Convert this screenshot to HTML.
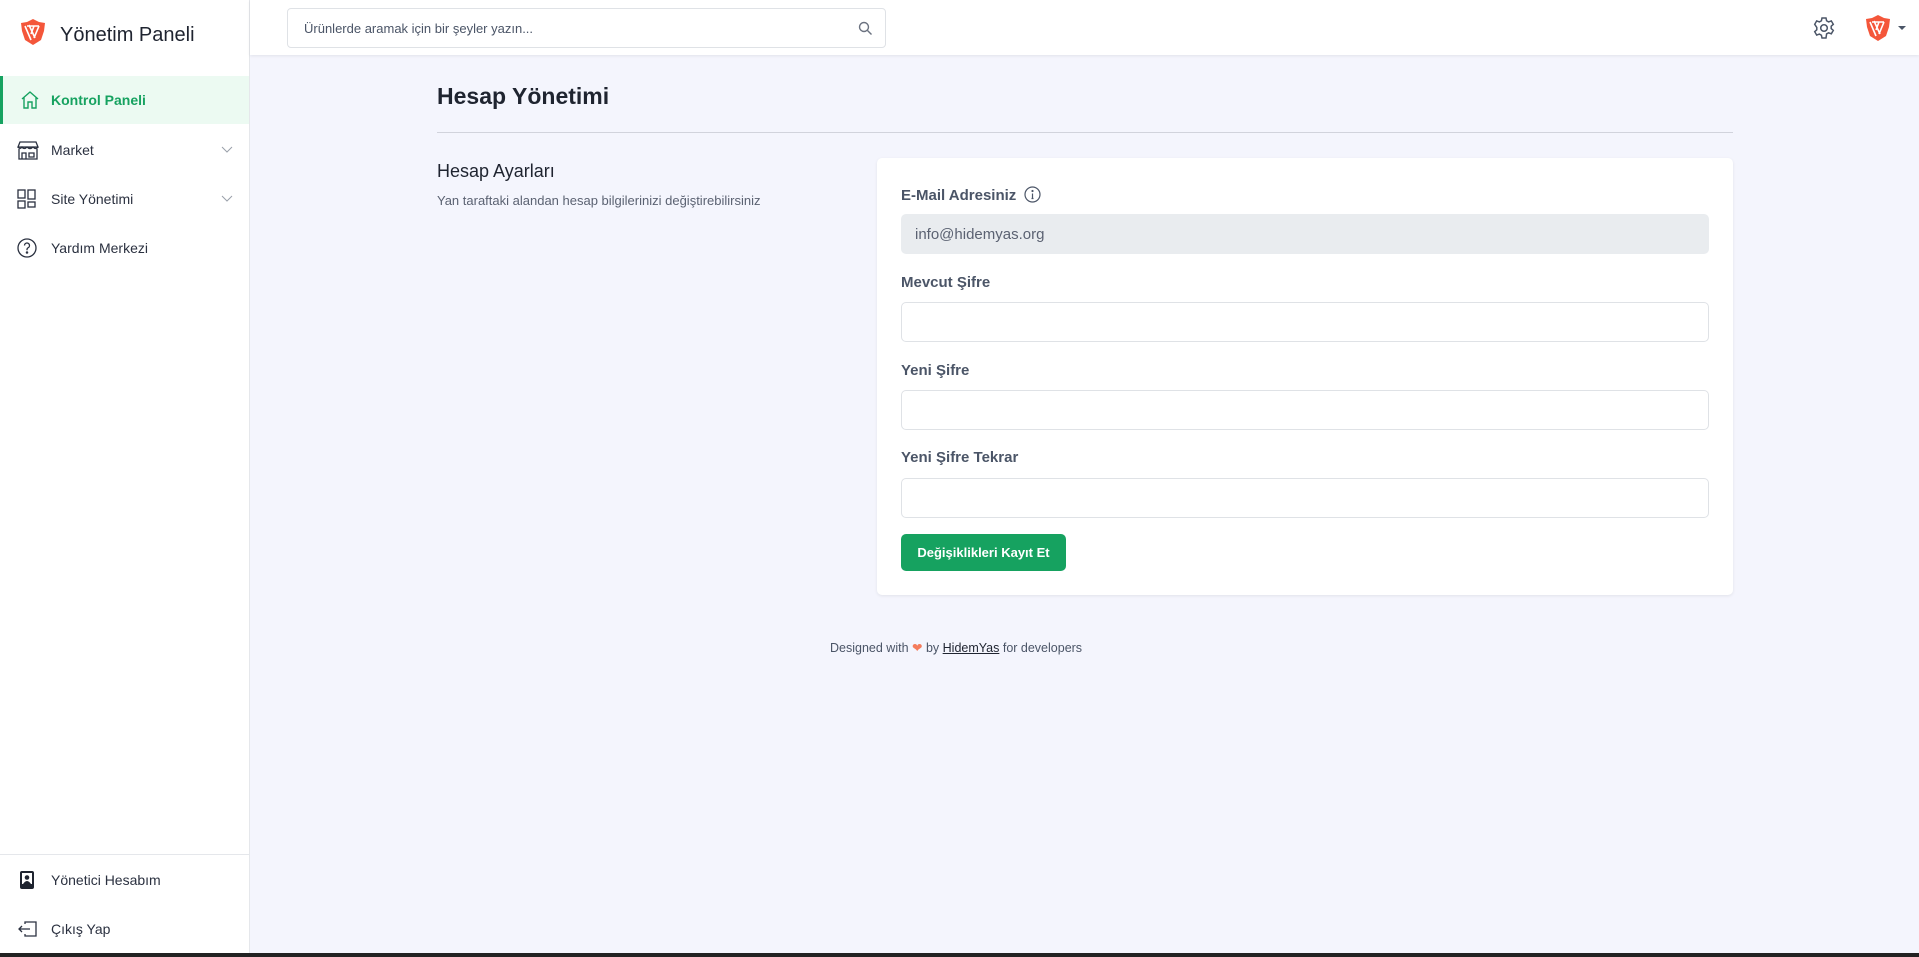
<!DOCTYPE html>
<html><head><meta charset="utf-8"><style>
*{box-sizing:border-box;margin:0;padding:0}
body{width:1919px;height:957px;overflow:hidden;background:#f4f5fd;font-family:"Liberation Sans",sans-serif;position:relative;color:#1f2430}
.side{position:absolute;left:0;top:0;width:250px;height:953px;background:#fff;border-right:1px solid #e5e7eb}
.hdr{position:absolute;left:250px;top:0;right:0;height:55px;background:#fff;box-shadow:0 1px 3px rgba(0,0,0,.08)}
.item{position:absolute;left:0;width:249px;height:48px;display:flex;align-items:center;font-size:14px;color:#2b3140}
.item svg{position:absolute;left:17px}
.item span{position:absolute;left:51px}
.item .chev{position:absolute;left:221px}
.lbl{position:absolute;left:901px;font-size:15px;font-weight:bold;color:#4b5567}
.inp{position:absolute;left:901px;width:808px;height:40px;border:1px solid #dfe2e6;border-radius:5px;background:#fff}
</style></head><body>
<div class="side">
 <svg style="position:absolute;left:19px;top:18px" width="28" height="28" viewBox="0 0 28 28"><path d="M14 1l6 3 6 1-1 8-3 9-8 5-8-5-3-9-1-8 6-1z" fill="#f4563a"/><path d="M6 8l6 14M10 7l6 13M15 8l-3 8M20 8l-5 12M8 8h12" stroke="#fff" stroke-width="1.6" fill="none"/></svg>
 <div style="position:absolute;left:60px;top:24px;font-size:20px;color:#1f2430">Yönetim Paneli</div>
 <div class="item" style="top:76px;background:#ecfaf2;border-left:3px solid #16a260;color:#16a260;font-weight:bold">
  <svg style="left:17px" width="20" height="20" viewBox="0 0 20 20" fill="none" stroke="#16a260" stroke-width="1.4"><path d="M2 9l8-7 8 7M4 7v11h4v-6h4v6h4V7"/></svg><span style="left:48px">Kontrol Paneli</span></div>
 <div class="item" style="top:126px"><svg width="22" height="20" viewBox="0 0 22 20" fill="none" stroke="#2b3140" stroke-width="1.3"><path d="M3 2h16l2 5H1zM1 7q2 3 4 0q2 3 5 0q3 3 6 0q3 3 5 0M2 9v10h18V9M5 19v-6h4v6M12 13h5v4h-5z"/></svg><span>Market</span><svg class="chev" width="12" height="8" viewBox="0 0 12 8"><path d="M1 1l5 5 5-5" stroke="#9aa0aa" fill="none"/></svg></div>
 <div class="item" style="top:175px"><svg width="20" height="20" viewBox="0 0 20 20" fill="none" stroke="#2b3140" stroke-width="1.3"><rect x="1" y="1" width="7" height="8"/><rect x="1" y="12" width="7" height="7"/><rect x="11" y="1" width="7" height="9"/><rect x="11" y="13" width="7" height="5"/></svg><span>Site Yönetimi</span><svg class="chev" width="12" height="8" viewBox="0 0 12 8"><path d="M1 1l5 5 5-5" stroke="#9aa0aa" fill="none"/></svg></div>
 <div class="item" style="top:224px"><svg width="20" height="20" viewBox="0 0 20 20" fill="none" stroke="#2b3140" stroke-width="1.3"><circle cx="10" cy="10" r="9"/><path d="M7.5 7.5a2.5 2.5 0 1 1 3.5 2.3c-.8.4-1 .9-1 1.7v.8"/><circle cx="10" cy="14.5" r=".6" fill="#2b3140"/></svg><span>Yardım Merkezi</span></div>
 <div style="position:absolute;left:0;top:854px;width:249px;border-top:1px solid #e5e7eb"></div>
 <div class="item" style="top:856px"><svg width="20" height="20" viewBox="0 0 20 20"><rect x="3" y="1" width="14" height="18" rx="2" fill="#1f2430"/><rect x="5" y="3" width="10" height="11" fill="#fff"/><circle cx="10" cy="7.5" r="2.3" fill="#1f2430"/><path d="M6 14q4-6 8 0z" fill="#1f2430"/></svg><span>Yönetici Hesabım</span></div>
 <div class="item" style="top:905px"><svg width="22" height="20" viewBox="0 0 22 20" fill="none" stroke="#2b3140" stroke-width="1.3"><path d="M8 5V3h11v14H8v-2M13 10H2M5 7l-3 3 3 3"/></svg><span>Çıkış Yap</span></div>
</div>
<div style="position:absolute;left:0;top:953px;width:1919px;height:4px;background:#222"></div>
<div class="hdr">
 <div style="position:absolute;left:37px;top:8px;width:599px;height:40px;border:1px solid #dfe2e6;border-radius:4px;font-size:13px;color:#4b5567;padding:12px 16px">Ürünlerde aramak için bir şeyler yazın...<svg style="position:absolute;right:12px;top:12px" width="15" height="15" viewBox="0 0 15 15" fill="none" stroke="#6b7280" stroke-width="1.4"><circle cx="6" cy="6" r="4.5"/><path d="M9.5 9.5l4 4"/></svg></div>
 <svg style="position:absolute;left:1562px;top:16px" width="24" height="24" viewBox="0 0 24 24" fill="none" stroke="#4b5567" stroke-width="1.5"><path d="M10 2h4l.6 2.8 2 1.1 2.7-1 2 3.4-2.1 1.9v2.3l2.1 1.9-2 3.4-2.7-1-2 1.1L14 22h-4l-.6-2.8-2-1.1-2.7 1-2-3.4 2.1-1.9v-2.3L2.7 8.3l2-3.4 2.7 1 2-1.1z"/><circle cx="12" cy="12" r="3.3"/></svg>
 <svg style="position:absolute;left:1614px;top:14px" width="28" height="28" viewBox="0 0 28 28"><path d="M14 1l6 3 6 1-1 8-3 9-8 5-8-5-3-9-1-8 6-1z" fill="#f4563a"/><path d="M6 8l6 14M10 7l6 13M15 8l-3 8M20 8l-5 12M8 8h12" stroke="#fff" stroke-width="1.6" fill="none"/></svg>
 <div style="position:absolute;left:1648px;top:26px;border:4px solid transparent;border-top:4px solid #4b5567"></div>
</div>
<div style="position:absolute;left:437px;top:83px;font-size:23px;font-weight:bold;color:#1f2430">Hesap Yönetimi</div>
<div style="position:absolute;left:437px;top:132px;width:1296px;border-top:1px solid #d1d3dc"></div>
<div style="position:absolute;left:437px;top:161px;font-size:18px;color:#1f2430">Hesap Ayarları</div>
<div style="position:absolute;left:437px;top:193px;font-size:13px;color:#5b6272">Yan taraftaki alandan hesap bilgilerinizi değiştirebilirsiniz</div>
<div style="position:absolute;left:877px;top:158px;width:856px;height:437px;background:#fff;border-radius:5px;box-shadow:0 1px 3px rgba(0,0,0,.08)"></div>
<div class="lbl" style="top:186px">E-Mail Adresiniz <svg style="vertical-align:-3px;margin-left:4px" width="17" height="17" viewBox="0 0 17 17" fill="none" stroke="#4b5567" stroke-width="1.2"><circle cx="8.5" cy="8.5" r="7.5"/><path d="M8.5 7.5v5M7.5 12.5h2"/><circle cx="8.5" cy="5" r=".5" fill="#4b5567"/></svg></div>
<div class="inp" style="top:214px;background:#e9ecef;border-color:#e9ecef;font-size:15px;color:#5b6272;padding:11px 13px">info@hidemyas.org</div>
<div class="lbl" style="top:274px">Mevcut Şifre</div>
<div class="inp" style="top:302px"></div>
<div class="lbl" style="top:362px">Yeni Şifre</div>
<div class="inp" style="top:390px"></div>
<div class="lbl" style="top:449px">Yeni Şifre Tekrar</div>
<div class="inp" style="top:478px"></div>
<div style="position:absolute;left:901px;top:534px;width:165px;height:37px;background:#16a260;border-radius:5px;color:#fff;font-size:13px;font-weight:bold;text-align:center;line-height:37px">Değişiklikleri Kayıt Et</div>
<div style="position:absolute;left:830px;top:640px;font-size:12.5px;color:#4b5567">Designed with <span style="color:#f47c5c">&#10084;</span> by <u style="color:#1f2430">HidemYas</u> for developers</div>
</body></html>
